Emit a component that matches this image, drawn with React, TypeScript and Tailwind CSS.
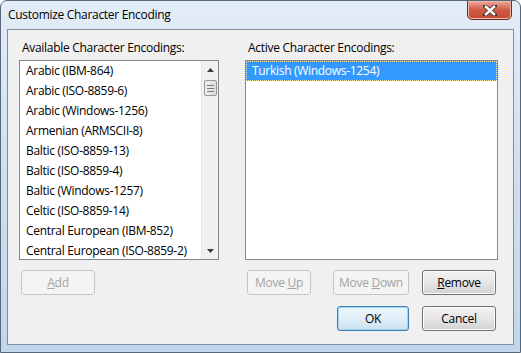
import React from 'react';

const available = [
  'Arabic (IBM-864)',
  'Arabic (ISO-8859-6)',
  'Arabic (Windows-1256)',
  'Armenian (ARMSCII-8)',
  'Baltic (ISO-8859-13)',
  'Baltic (ISO-8859-4)',
  'Baltic (Windows-1257)',
  'Celtic (ISO-8859-14)',
  'Central European (IBM-852)',
  'Central European (ISO-8859-2)',
];

type BtnProps = {
  label: React.ReactNode;
  width: string;
  disabled?: boolean;
  primary?: boolean;
  className?: string;
};

const WinButton: React.FC<BtnProps> = ({ label, width, disabled, primary, className = '' }) => {
  let skin =
    'border-[#707070] bg-gradient-to-b from-[#f2f2f2] via-[#e6e6e6] to-[#d2d2d2] text-black shadow-[inset_0_0_0_1px_#fcfcfc]';
  if (disabled) skin = 'border-[#c3c6c9] bg-[#f4f4f4] text-[#a3a3a3]';
  if (primary)
    skin =
      'border-[#3c7fb1] bg-gradient-to-b from-[#eaf6fd] via-[#e2eff8] to-[#c9e0ef] text-black shadow-[inset_0_0_0_1px_#9ed6f4]';
  return (
    <div
      className={`${width} ${skin} ${className} h-[25px] flex items-center justify-center border rounded-[3px] text-[12px]`}
    >
      {label}
    </div>
  );
};

const Scrollbar: React.FC = () => (
  <div className="w-[17px] h-full bg-[#f0f0f0] border-l border-[#e6e6e6] flex flex-col items-center">
    <div className="h-[17px] w-full flex items-center justify-center">
      <svg width="7" height="4" viewBox="0 0 7 4">
        <path d="M3.5 0 L7 4 L0 4 Z" fill="#3c3c3c" />
      </svg>
    </div>
    <div className="mt-[2px] w-[13px] h-[16px] border border-[#979797] rounded-[2px] bg-gradient-to-r from-[#f0f0f0] to-[#dcdcdc] flex flex-col items-center justify-center gap-[2px]">
      <div className="w-[7px] h-[1px] bg-[#7a7a7a]" />
      <div className="w-[7px] h-[1px] bg-[#7a7a7a]" />
      <div className="w-[7px] h-[1px] bg-[#7a7a7a]" />
    </div>
    <div className="flex-1" />
    <div className="h-[17px] w-full flex items-center justify-center">
      <svg width="7" height="4" viewBox="0 0 7 4">
        <path d="M0 0 L7 0 L3.5 4 Z" fill="#3c3c3c" />
      </svg>
    </div>
  </div>
);

const App: React.FC = () => {
  return (
    <div
      className="w-[521px] h-[353px] flex flex-col rounded-t-[7px] border border-[#56677a] bg-gradient-to-b from-[#e3edf7] via-[#cfdff0] to-[#c2d6ec] overflow-hidden relative tracking-[-0.3px]"
      style={{ fontFamily: '"Open Sans", "Noto Sans", sans-serif' }}
    >
      {/* title bar */}
      <div className="h-[28px] flex items-center pl-[7px] text-[12px] text-black">
        Customize Character Encoding
      </div>
      <div className="absolute top-[-1px] right-[8px] w-[45px] h-[20px] rounded-b-[5px] border border-[#6d2a22] bg-gradient-to-b from-[#e9a99b] via-[#cf5a44] to-[#c34a33] flex items-center justify-center shadow-[inset_0_0_0_1px_#f0b9ab]">
        <svg width="14" height="11" viewBox="0 0 14 11">
          <path
            d="M2 1 L12 10 M12 1 L2 10"
            stroke="#3b2a28"
            strokeWidth="4"
            strokeLinecap="square"
            fill="none"
          />
          <path d="M2 1 L12 10 M12 1 L2 10" stroke="#ffffff" strokeWidth="2.4" fill="none" />
        </svg>
      </div>

      {/* client area */}
      <div className="flex-1 mx-[6px] mb-[7px] border border-[#7e8fa3] bg-[#f0f0f0] pl-[11px] pr-[13px] pt-[9px] text-[12px] text-black">
        <div className="grid grid-cols-[200px_253px] gap-x-[26px]">
          <div className="pl-[3px] h-[18px] leading-[18px]">Available Character Encodings:</div>
          <div className="pl-[3px] h-[18px] leading-[18px]">Active Character Encodings:</div>

          <div className="mt-[3px] h-[200px] border border-[#828790] bg-white flex overflow-hidden">
            <div className="flex-1">
              {available.map((e) => (
                <div key={e} className="h-[20px] leading-[20px] pl-[6px] whitespace-nowrap">
                  {e}
                </div>
              ))}
            </div>
            <Scrollbar />
          </div>
          <div className="mt-[3px] h-[200px] border border-[#828790] bg-white">
            <div className="h-[20px] leading-[18px] pl-[5px] bg-[#3399ff] text-white border border-dotted border-[#f5e9a0]">
              Turkish (Windows-1254)
            </div>
          </div>

          <div className="mt-[10px] flex">
            <WinButton
              width="w-[74px]"
              className="ml-[2px]"
              disabled
              label={
                <span>
                  <span className="underline">A</span>dd
                </span>
              }
            />
          </div>
          <div className="mt-[10px] flex">
            <WinButton
              width="w-[64px]"
              className="ml-[2px]"
              disabled
              label={
                <span>
                  Move <span className="underline">U</span>p
                </span>
              }
            />
            <WinButton
              width="w-[76px]"
              className="ml-[22px]"
              disabled
              label={
                <span>
                  Move <span className="underline">D</span>own
                </span>
              }
            />
            <WinButton
              width="w-[74px]"
              className="ml-[13px]"
              label={
                <span>
                  <span className="underline">R</span>emove
                </span>
              }
            />
          </div>

          <div />
          <div className="mt-[11px] flex justify-end gap-[13px] pr-[2px]">
            <WinButton width="w-[72px]" primary label="OK" />
            <WinButton width="w-[74px]" label="Cancel" />
          </div>
        </div>
      </div>
    </div>
  );
};

export default App;
